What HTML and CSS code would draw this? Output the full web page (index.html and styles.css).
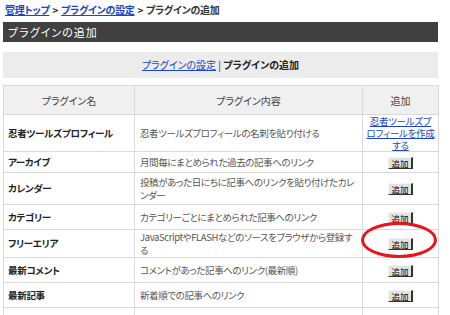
FILE: index.html
```html
<!DOCTYPE html>
<html lang="ja">

<head>
    <meta charset="UTF-8">
    <meta name="viewport" content="width=device-width, initial-scale=1.0">
    <title>プラグインの追加</title>

    <link rel="stylesheet" href="styles.css">
</head>

<body>
    <div class="container">
        <p class="breadcrumb">
            <a href="#">管理トップ</a> &gt; <a href="#">プラグインの設定</a> &gt; プラグインの追加
        </p>

        <h1 class="title-bar">プラグインの追加</h1>

        <p class="subnav"><a href="#">プラグインの設定</a> | <strong>プラグインの追加</strong></p>

        <table class="plugins">
            <colgroup>
                <col class="col-name">
                <col class="col-desc">
                <col class="col-add">
            </colgroup>
            <tr class="head">
                <th>プラグイン名</th>
                <th>プラグイン内容</th>
                <th>追加</th>
            </tr>
            <tr class="r-profile">
                <td class="name">忍者ツールズプロフィール</td>
                <td class="desc">忍者ツールズプロフィールの名刺を貼り付ける</td>
                <td class="add link-cell"><a href="#" class="make-link">忍者ツールズプロフィールを作成する</a></td>
            </tr>
            <tr class="r-short">
                <td class="name">アーカイブ</td>
                <td class="desc">月間毎にまとめられた過去の記事へのリンク</td>
                <td class="add"><button type="button">追加</button></td>
            </tr>
            <tr class="r-two">
                <td class="name">カレンダー</td>
                <td class="desc">投稿があった日にちに記事へのリンクを貼り付けたカレンダー</td>
                <td class="add"><button type="button">追加</button></td>
            </tr>
            <tr class="r-one">
                <td class="name">カテゴリー</td>
                <td class="desc">カテゴリーごとにまとめられた記事へのリンク</td>
                <td class="add"><button type="button">追加</button></td>
            </tr>
            <tr class="r-free">
                <td class="name">フリーエリア</td>
                <td class="desc desc-narrow">JavaScriptやFLASHなどのソースをブラウザから登録する</td>
                <td class="add marked"><button type="button">追加</button><span class="circle"></span></td>
            </tr>
            <tr class="r-one">
                <td class="name">最新コメント</td>
                <td class="desc">コメントがあった記事へのリンク(最新順)</td>
                <td class="add"><button type="button">追加</button></td>
            </tr>
            <tr class="r-one">
                <td class="name">最新記事</td>
                <td class="desc">新着順での記事へのリンク</td>
                <td class="add"><button type="button">追加</button></td>
            </tr>
            <tr class="r-one">
                <td class="name">最新トラックバック</td>
                <td class="desc">トラックバックがあった記事へのリンク</td>
                <td class="add"><button type="button">追加</button></td>
            </tr>
        </table>
    </div>
</body>

</html>
```

FILE: styles.css
```css
body {
    font-family: "Noto Sans CJK JP", "Noto Sans", sans-serif;
    font-size: 10px;
    font-feature-settings: "palt";
    margin: 0;
    padding: 0;
    background-color: #fff;
    color: #333;
}

a {
    color: #1a44cc;
}

.container {
    width: 435px;
    padding: 3px 0 0 3px;
}

.breadcrumb {
    margin: 0;
    padding-left: 2px;
    height: 19px;
    line-height: 14px;
    font-weight: bold;
    letter-spacing: -0.3px;
    word-spacing: 1px;
}

.title-bar {
    margin: 0;
    height: 20px;
    line-height: 20px;
    padding-left: 5px;
    font-size: 11px;
    font-weight: normal;
    letter-spacing: 1px;
    color: #fff;
    background-color: #404040;
}

.subnav {
    margin: 10px 0 0;
    height: 26px;
    line-height: 26px;
    text-align: center;
    background-color: #ececec;
}

.subnav strong {
    color: #222;
}

.plugins {
    margin-top: 7px;
    width: 435px;
    border-collapse: collapse;
    table-layout: fixed;
}

.col-name {
    width: 131px;
}

.col-desc {
    width: 228px;
}

.col-add {
    width: 76px;
}

.plugins th,
.plugins td {
    border: 1px solid #d9d9d9;
    padding: 0 4px;
    line-height: 13px;
    vertical-align: middle;
    text-align: left;
    color: #555;
}

.plugins th {
    height: 28px;
    text-align: center;
    font-weight: normal;
    color: #444;
    background-color: #f0f0f0;
}

.plugins td.name {
    font-size: 9.5px;
    letter-spacing: -0.3px;
    font-weight: bold;
    color: #222;
}

.plugins td.desc {
    font-size: 9.5px;
    letter-spacing: -0.4px;
    padding: 0 1px 0 5px;
}

.plugins td.desc-narrow {
    padding-right: 6px;
}

.plugins td.add {
    text-align: center;
    padding: 0 1px;
}

.plugins td.link-cell {
    padding: 0 2.5px;
}

.r-profile td {
    height: 36px;
}

.r-short td {
    height: 20px;
}

.r-two td {
    height: 31px;
}

.r-one td {
    height: 24px;
}

.r-free td {
    height: 27px;
}

.make-link {
    display: block;
    font-size: 9.5px;
    letter-spacing: -0.3px;
    line-height: 12px;
    word-break: break-all;
}

button {
    font-family: inherit;
    font-size: 8.5px;
    line-height: 8px;
    height: 12px;
    padding: 0 2px;
    color: #000;
    background-color: #e2e2e2;
    border-style: solid;
    border-color: #f4f4f4 #333 #333 #f4f4f4;
    border-width: 1px 2px 1px 1px;
    cursor: pointer;
}

.marked {
    position: relative;
}

.circle {
    position: absolute;
    left: -2px;
    top: -8px;
    width: 70px;
    height: 30px;
    border: 3px solid #e8141a;
    border-radius: 50%;
}
```
